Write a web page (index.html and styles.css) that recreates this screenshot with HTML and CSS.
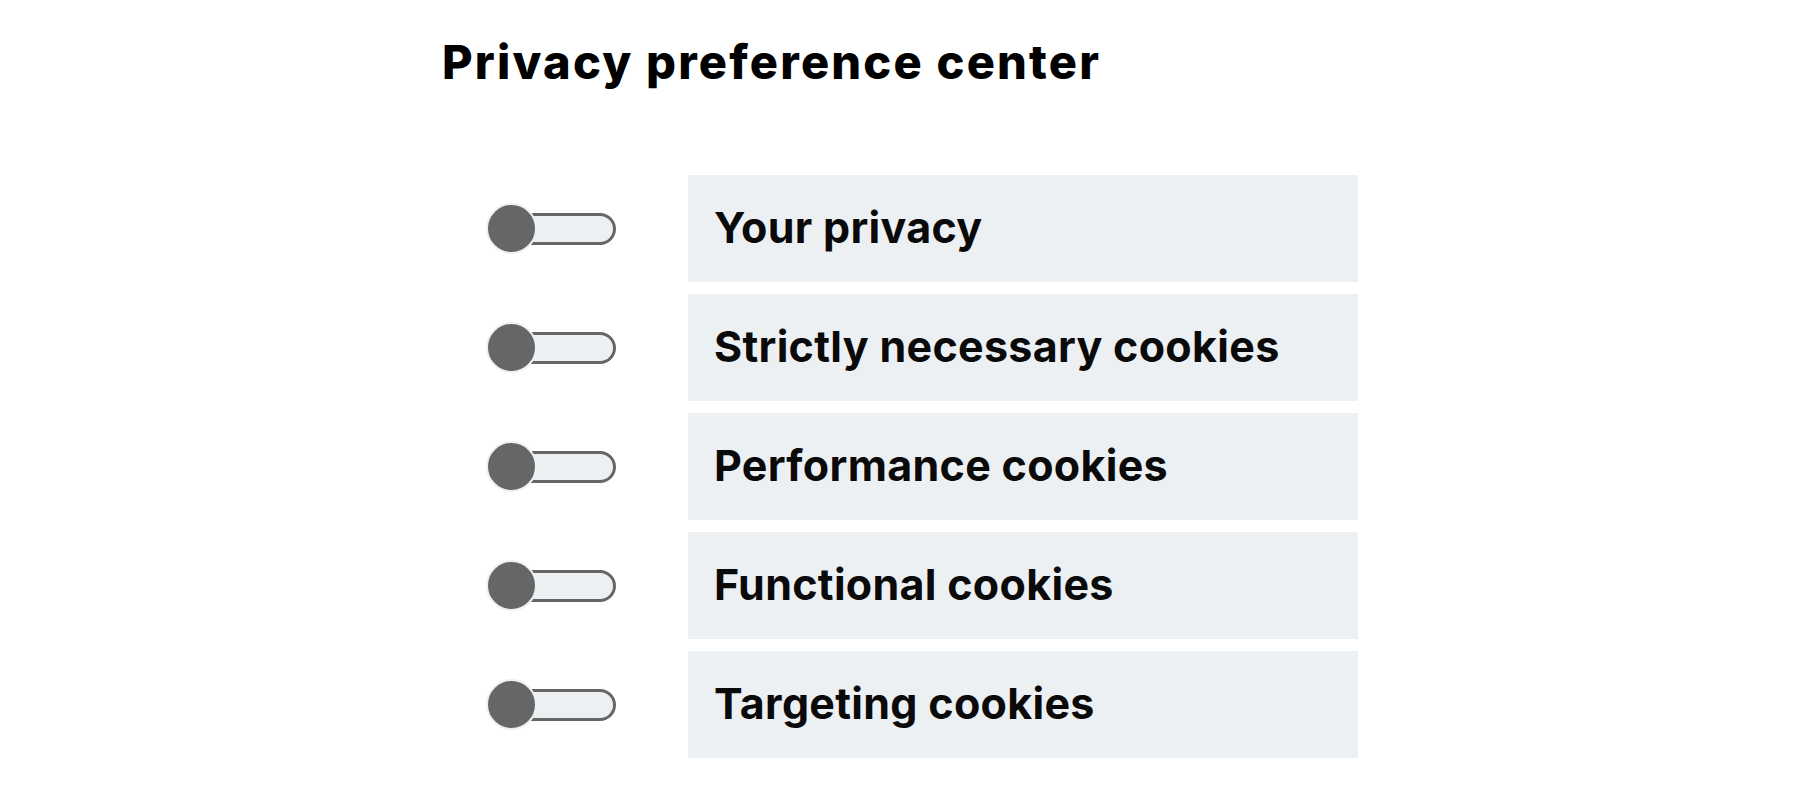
FILE: index.html
```html
<!DOCTYPE html>
<html lang="en">
<head>
<meta charset="UTF-8" />
<title>Privacy preference center</title>
<link rel="stylesheet" href="styles.css">
</head>
<body>
    <main class="center">
        <h1>Privacy preference center</h1>

        <ul class="prefs">
            <li class="pref">
                <label class="toggle"><input type="checkbox" /><span class="track"></span><span class="knob"></span></label>
                <div class="pref-title">Your privacy</div>
            </li>
            <li class="pref">
                <label class="toggle"><input type="checkbox" /><span class="track"></span><span class="knob"></span></label>
                <div class="pref-title">Strictly necessary cookies</div>
            </li>
            <li class="pref">
                <label class="toggle"><input type="checkbox" /><span class="track"></span><span class="knob"></span></label>
                <div class="pref-title">Performance cookies</div>
            </li>
            <li class="pref">
                <label class="toggle"><input type="checkbox" /><span class="track"></span><span class="knob"></span></label>
                <div class="pref-title">Functional cookies</div>
            </li>
            <li class="pref">
                <label class="toggle"><input type="checkbox" /><span class="track"></span><span class="knob"></span></label>
                <div class="pref-title">Targeting cookies</div>
            </li>
        </ul>
    </main>
</body>
</html>
```

FILE: styles.css
```css
* {
    margin:0px;
    padding:0px;
    box-sizing:border-box;
}

body {
    font-family:Inter, 'Noto Sans', sans-serif;
    color:#000;
    background-color:#fff;
}

.center {
    padding:33px 0px 0px 442px;
}

h1 {
    font-size:47px;
    font-weight:800;
    line-height:57px;
    letter-spacing:2.2px;
}

.prefs {
    list-style:none;
    margin-top:85px;
}

.pref {
    display:flex;
    align-items:center;
    margin-bottom:12px;
}

.toggle {
    position:relative;
    display:block;
    margin-left:44px;
    width:130px;
    height:51px;
    cursor:pointer;
}

.toggle input {
    display:none;
}

.track {
    position:absolute;
    top:10px;
    left:16px;
    right:0px;
    height:32px;
    border:3px solid #666;
    border-radius:0px 16px 16px 0px;
    background-color:#edf0f3;
}

.knob {
    position:absolute;
    top:0px;
    left:0px;
    width:51px;
    height:51px;
    border:2px solid #eef0f2;
    border-radius:50%;
    background-color:#666;
}

.pref-title {
    margin-left:72px;
    width:670px;
    height:107px;
    padding:0px 0px 4px 26px;
    display:flex;
    align-items:center;
    font-size:43px;
    font-weight:700;
    letter-spacing:0.3px;
    color:#0a0a0a;
    background-color:#edf0f3;
}
```
